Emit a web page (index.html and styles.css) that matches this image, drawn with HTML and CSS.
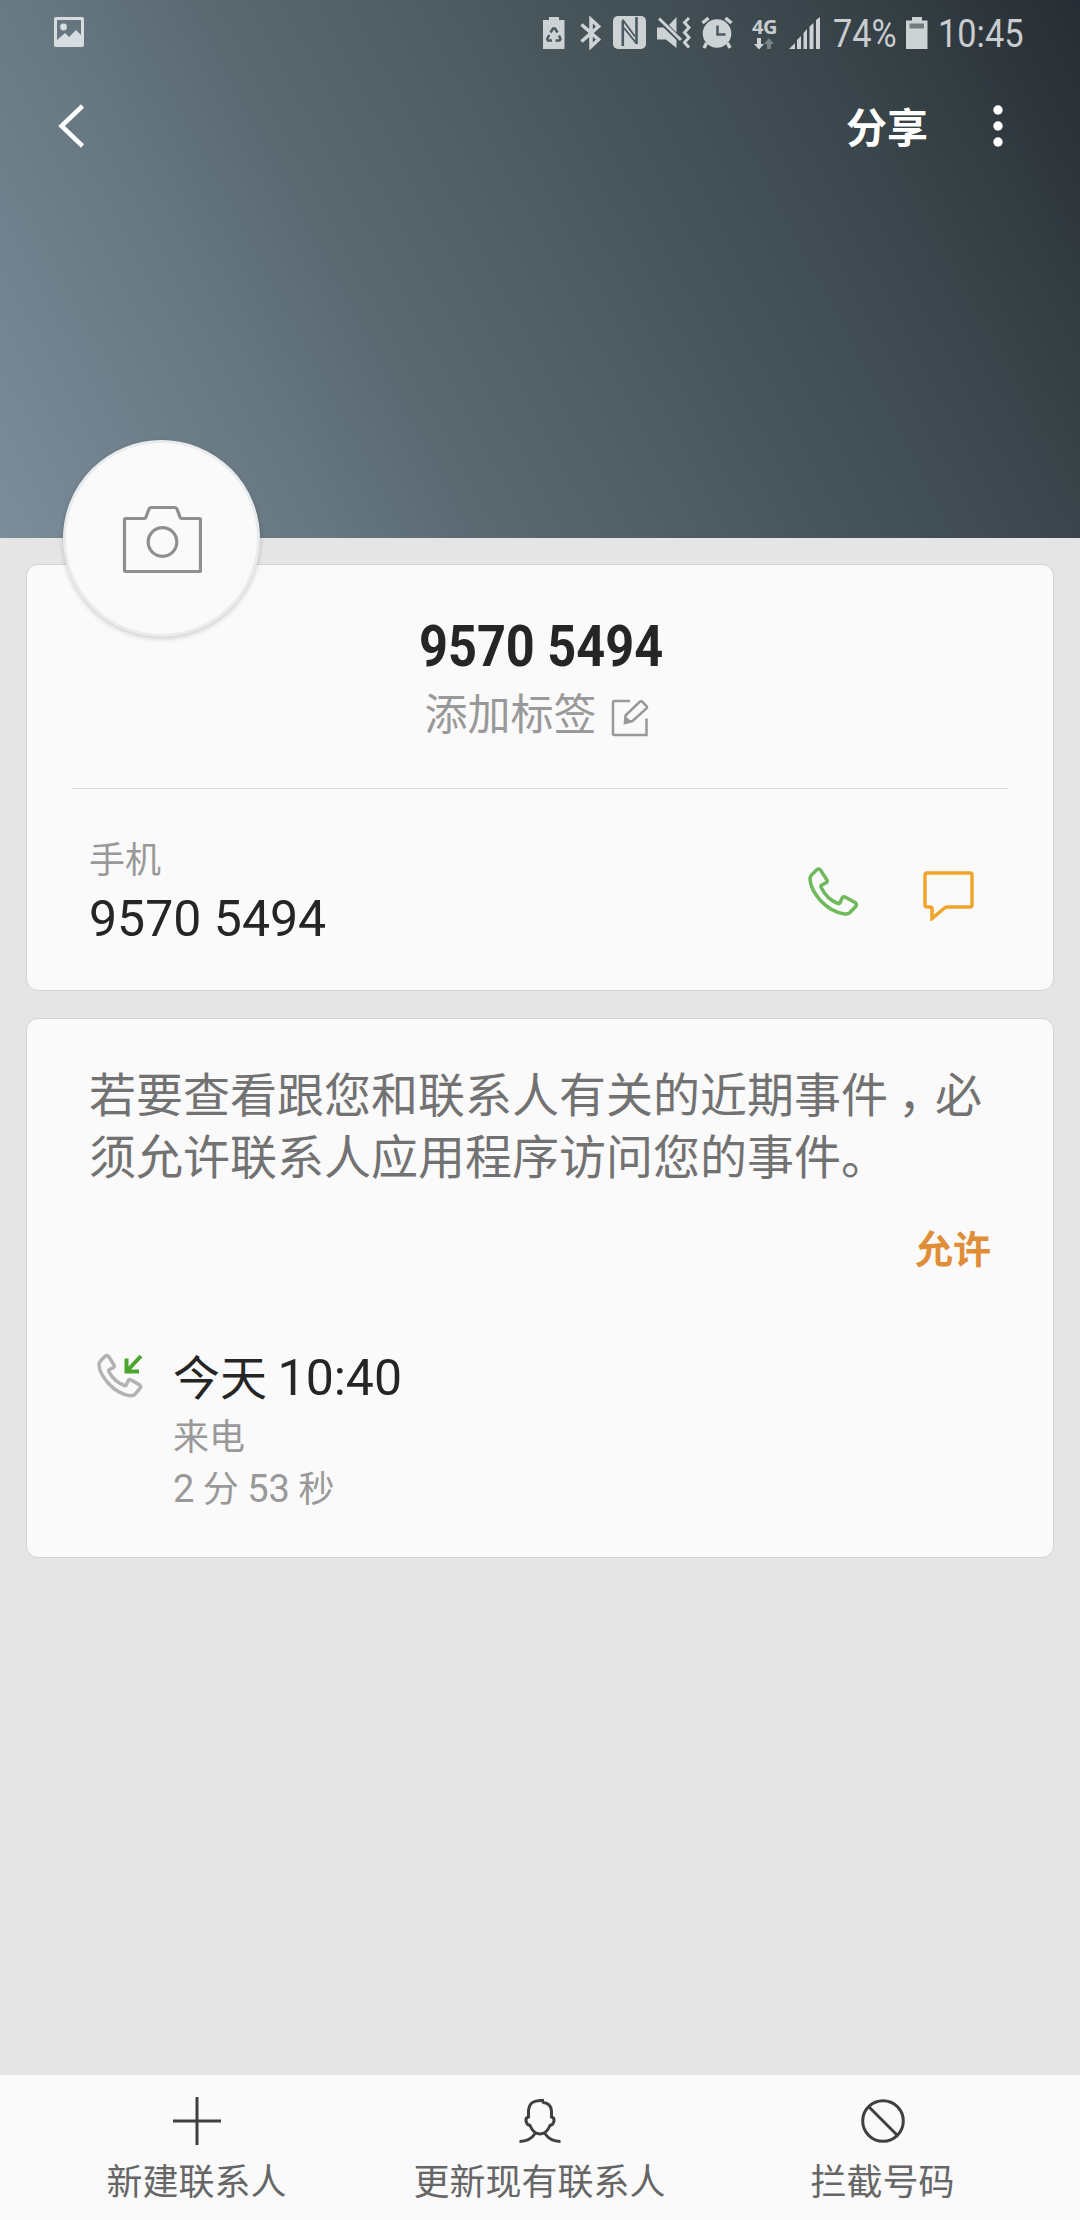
FILE: index.html
```html
<!DOCTYPE html>
<html lang="zh-CN">
<head>
<meta charset="utf-8">
<title>联系人</title>
<link rel="stylesheet" href="styles.css">
</head>
<body>
<div class="screen">
  <header class="hero">
    <div class="status">
      <svg class="st-picture" width="32" height="32" viewBox="0 0 32 32"><path fill-rule="evenodd" d="M3 1h26a2 2 0 0 1 2 2v26a2 2 0 0 1-2 2H3a2 2 0 0 1-2-2V3a2 2 0 0 1 2-2zM4 4v20l8-7 4 4 7-7 5 5V4z"/><circle cx="10.500" cy="11" r="3.400"/></svg>
      <svg class="st-saver" width="22" height="32" viewBox="0 0 22 32"><path d="M6 0h10v3h5.500v29H0V3h6z"/><path class="cut recycle" d="M7.500 15.500L10 11.500h2l2.500 4M16 18.500l1.500 3.500-1 1.500H12.500M9 23.500H5l-.8-1.500 2-4"/></svg>
      <svg class="st-bt" width="22" height="34" viewBox="0 0 22 34"><path class="line" stroke-width="3.600" d="M1.500 8.500L18.500 23.500 11 30.500V3.500l7.500 7L1.500 25.500"/></svg>
      <svg class="st-nfc" width="33" height="33" viewBox="0 0 33 33"><rect width="33" height="33" rx="5"/><path class="dark-line" stroke-width="2.600" d="M9.800 30V5M23.500 28V1"/><path class="dark-line" stroke-width="1.800" d="M9.500 3.500L22 20.500M11 12l12.500 15.500"/></svg>
      <svg class="st-mute" width="36" height="34" viewBox="0 0 36 34"><path d="M1 11.500h6.500L20.500 24v8L10 23.500H1zM20.500 1v15.500L13 9z"/><path class="line" stroke-width="3" d="M3 2.500l22 21.500M33 2l-4.500 4.500 4.500 5-4.500 5 4.500 5-4.500 5 4.500 5"/></svg>
      <svg class="st-alarm" width="32" height="34" viewBox="0 0 32 34"><circle cx="16" cy="17.500" r="14.300"/><path class="line" stroke-width="3.500" d="M1.500 7l6-5M24.500 2l6 5M5.500 27L3 32M26.500 27l2.500 5"/><path class="cut" d="M16.500 9.500v9h8"/></svg>
      <div class="net">
        <span class="net-type">4G</span>
        <svg width="20" height="12" viewBox="0 0 20 12"><path d="M3 0h4v6h3L5 11.500 0 6h3z"/><path opacity=".42" d="M13 11V6h-3l5-6 5 6h-3v5z"/></svg>
      </div>
      <svg class="st-signal" width="32" height="33" viewBox="0 0 32 33"><path d="M0 32l6-6v6zM8 32v-9l4-4v13zM14.500 32V16l3.500-4v20zM20.500 32V9.500L24.500 6v26zM27 32V3l4-3v32z"/></svg>
      <span class="pct"><span class="narrow">74%</span></span>
      <svg class="st-batt" width="22" height="33" viewBox="0 0 22 33"><path d="M6 0h10v3.500h5.500V32H0V3.500h6z"/><path class="used" d="M3.500 6.500h14.500v5H3.500z"/></svg>
      <span class="clock"><span class="narrow">10:45</span></span>
    </div>
    <nav class="toolbar">
      <svg class="back" width="28" height="44" viewBox="0 0 28 44"><path d="M24.500 2L3.500 22l21 20"/></svg>
      <span class="share">分享</span>
      <svg class="more" width="10" height="42" viewBox="0 0 10 42"><circle cx="5" cy="5" r="4.700"/><circle cx="5" cy="21" r="4.700"/><circle cx="5" cy="37" r="4.700"/></svg>
    </nav>
    <div class="avatar">
      <svg width="80" height="68" viewBox="0 0 80 68"><path d="M3.500 13.500H22q1.500 0 2-1.500l3-8q.5-1.500 2-1.500h24q1.500 0 2 1.500l3 8q.5 1.500 2 1.500h17.500q1 0 1 1v51q0 1-1 1h-74q-1 0-1-1v-51q0-1 1-1z"/><circle cx="40.500" cy="37" r="14.300"/></svg>
    </div>
  </header>

  <main class="content">
    <section class="card profile">
      <h1 class="name"><span class="narrow">9570 5494</span></h1>
      <div class="tag">
        <span>添加标签</span>
        <svg width="38" height="38" viewBox="0 0 38 38"><path d="M19 2H3.500Q2 2 2 3.500v31Q2 36 3.500 36h32V19.500"/><path d="M14.500 16.500L28.500 3q1.500-1.500 3 0l4 4q1 1.200 0 2.400L21.500 22l-7.500 2z"/><path class="tip" d="M14.500 17.500l6.500 5-7.500 2.500z"/></svg>
      </div>
      <div class="phone">
        <div class="phone-text">
          <div class="kind">手机</div>
          <div class="number">9570 5494</div>
        </div>
        <svg class="call" width="50" height="50" viewBox="0 0 50 50"><path d="M3 9.500L8.500 4q2.300-2 4.200.2l6.300 9.800q.8 2-1 2.800l-4.500 2.500q-1 .7-.3 2.200Q19 33.500 30 37.500q1.500.5 2-.8l2-4.500q1-2.200 3-1.200l10 5.500q2.500 1.800.7 4L42 46.500q-2 2-5.500 1.500Q23 46 12.500 34.500 2.800 23.500 2 13.500 2 11 3 9.500z"/></svg>
        <svg class="message" width="52" height="50" viewBox="0 0 52 50"><path d="M4 2h43q2 0 2 2v30q0 2-2 2H24q-1.500 0-2.500 1L9 47.500V38q0-2-2-2H4q-2 0-2-2V4q0-2 2-2z"/></svg>
      </div>
    </section>

    <section class="card events">
      <p class="notice">若要查看跟您和联系人有关的近期事件<span class="comma">，</span>必须允许联系人应用程序访问您的事件。</p>
      <div class="allow">允许</div>
      <div class="log">
        <svg class="incoming" width="46" height="48" viewBox="0 0 46 48"><path d="M3 9.500L8 4.300q2-1.600 3.700.2L17 13q.8 1.800-.8 2.600l-4 2.200q-.9.600-.3 2Q17.500 29.700 27.500 33.500q1.400.4 1.800-.7l1.800-4q1-2 2.700-1.100l8.500 5q2.300 1.600.7 3.600L38 42.300q-1.800 1.800-5 1.400Q21 42 11.500 31.500 2.500 21.500 2 13 2 11 3 9.500z"/><path class="arrow" d="M44 4L30.500 18.500M29.500 6.500v13H42"/></svg>
        <div class="log-text">
          <div class="when">今天 <span class="latin">10:40</span></div>
          <div class="detail">来电</div>
          <div class="detail"><span class="latin">2 </span>分<span class="latin"> 53 </span>秒</div>
        </div>
      </div>
    </section>
  </main>

  <footer class="actions">
    <div class="action">
      <svg width="50" height="50" viewBox="0 0 50 50"><path d="M25 1v48M1 25h48"/></svg>
      <span>新建联系人</span>
    </div>
    <div class="action">
      <svg width="50" height="50" viewBox="0 0 50 50"><path d="M27.500 6.500V4.500Q14 3.500 13.500 15v6q-3 .5-2.500 4t4 4.500Q18.500 38 25 38t10-8.500q3.500-1 4-4.500t-2.500-4v-6Q36 7 27.500 6.500M20.500 37Q15 45.500 4.500 45.500M29.500 37q5.500 8.500 16 8.500"/></svg>
      <span>更新现有联系人</span>
    </div>
    <div class="action">
      <svg width="50" height="50" viewBox="0 0 50 50"><circle cx="25" cy="25" r="20.300"/><path d="M10.500 10.500l29 29"/></svg>
      <span>拦截号码</span>
    </div>
  </footer>
</div>
</body>
</html>
```
FILE: styles.css
```css
* { box-sizing: border-box; }

body {
  margin: 0;
  background: #e5e5e5;
  font-family: "Noto Sans CJK SC", sans-serif;
}

svg { display: block; flex: none; }

.screen {
  width: 1080px;
  height: 2220px;
  display: flex;
  flex-direction: column;
}

.narrow {
  display: inline-block;
  transform: scaleX(.88);
  transform-origin: 0 50%;
}

/* header */
.hero {
  position: relative;
  height: 538px;
  flex: none;
  background: linear-gradient(62deg, #7b8d9a 0%, #6f808c 14%, #65767f 25%, #5b6a72 35%, #48565c 60%, #39454a 80%, #272d34 100%);
}

.status {
  height: 66px;
  display: flex;
  align-items: flex-start;
  padding: 16px 0 0 53px;
  fill: #cdd2d5;
  color: #c9cdd0;
  font-family: Roboto, sans-serif;
  font-size: 39px;
  line-height: 36px;
}
.line { fill: none; stroke: #cdd2d5; }
.cut { fill: none; stroke: #4b5961; stroke-width: 2.5; }
.dark-line { fill: none; stroke: #4b5961; }
.used { fill: #747a7e; }
.st-picture { fill: #d6dce0; }
.st-saver { margin: 1px 0 0 458px; }
.st-bt { margin-left: 15px; }
.st-nfc { margin-left: 11px; }
.st-mute { margin-left: 10px; }
.st-alarm { margin-left: 9px; }
.net { width: 25px; margin: 2px 0 0 19px; }
.net svg { margin: 5px 0 0 2px; }
.net-type {
  display: block;
  height: 15px;
  font: 700 20px/17px "Open Sans", sans-serif;
  letter-spacing: -.5px;
}
.st-signal { margin: 1px 0 0 12px; }
.pct { width: 73px; margin-left: 12px; }
.st-batt { margin-top: 1px; }
.clock { width: 90px; margin-left: 10px; }

.toolbar {
  height: 120px;
  display: flex;
  align-items: center;
  padding: 0 77px 0 58px;
}
.back { fill: none; stroke: #fff; stroke-width: 4.5; }
.more { fill: #fff; }
.share {
  margin: -2px 65px 0 auto;
  color: #fff;
  font-size: 41px;
  font-weight: 700;
  line-height: 60px;
}

.avatar {
  position: absolute;
  left: 63px;
  top: 440px;
  width: 197px;
  height: 197px;
  border: 3px solid #e9ecee;
  border-radius: 50%;
  background: #fafafa;
  box-shadow: 0 2px 5px rgba(0, 0, 0, .18);
  display: flex;
  align-items: center;
  justify-content: center;
}
.avatar svg { fill: none; stroke: #8f8f8f; stroke-width: 3.2; }

/* cards */
.content {
  flex: 1;
  display: flex;
  flex-direction: column;
  gap: 27px;
  padding: 26px 26px 0;
}
.card {
  border: 1px solid #d3d3d3;
  border-radius: 12px;
  background: #fafafa;
}
.profile { height: 427px; padding-top: 51px; }
.events { height: 540px; padding: 42px 62px 0; }

.name {
  margin: 0 0 0 392px;
  color: #252525;
  font: 700 58px/60px Roboto, sans-serif;
}
.name .narrow { transform: scaleX(.87); }
.tag {
  height: 60px;
  margin: 5px 7px 47px 0;
  display: flex;
  align-items: center;
  justify-content: center;
  gap: 14px;
  color: #999;
  font-size: 43px;
  line-height: 60px;
}
.tag svg { margin-top: 14px; fill: none; stroke: #999; stroke-width: 2.5; }
.tag .tip { fill: #999; stroke: none; }

.phone {
  margin: 0 45px;
  padding: 43px 33px 0 17px;
  border-top: 1px solid #dadada;
  display: flex;
}
.phone-text { flex: 1; }
.kind { color: #999; font-size: 36px; line-height: 50px; }
.number { margin-top: 5px; color: #252525; font: 50px/64px Roboto, sans-serif; }
.call { margin-top: 34px; fill: none; stroke: #6fb95d; stroke-width: 3.5; }
.message { margin: 39px 0 0 65px; fill: none; stroke: #efa42b; stroke-width: 3.5; }

.notice {
  margin: 0;
  color: #727272;
  font-size: 47px;
  line-height: 62px;
}
.comma { position: relative; left: 10px; }
.allow {
  margin-top: 36px;
  color: #df8e37;
  font-size: 38px;
  font-weight: 700;
  line-height: 52px;
  text-align: right;
}
.log { margin-top: 72px; display: flex; }
.incoming { margin: 7px 0 0 8px; fill: none; stroke: #b3b3b3; stroke-width: 3.5; }
.incoming .arrow { stroke: #4aa52e; stroke-width: 4; }
.log-text { margin-left: 30px; }
.latin { font-family: Roboto, sans-serif; }
.when { color: #252525; font-size: 47px; line-height: 60px; }
.when .latin { font-size: 50px; }
.detail { color: #999; font-size: 36px; line-height: 52px; word-spacing: -1px; }
.detail .latin { font-size: 38px; }

/* bottom actions */
.actions {
  height: 145px;
  padding: 0 26px 0 25px;
  display: grid;
  grid-template-columns: repeat(3, 1fr);
  background: #fafafa;
}
.action {
  display: flex;
  flex-direction: column;
  align-items: center;
  padding-top: 21px;
  color: #666;
  font-size: 36px;
  line-height: 50px;
}
.action svg { margin-bottom: 8px; fill: none; stroke: #404040; stroke-width: 3; }
```
